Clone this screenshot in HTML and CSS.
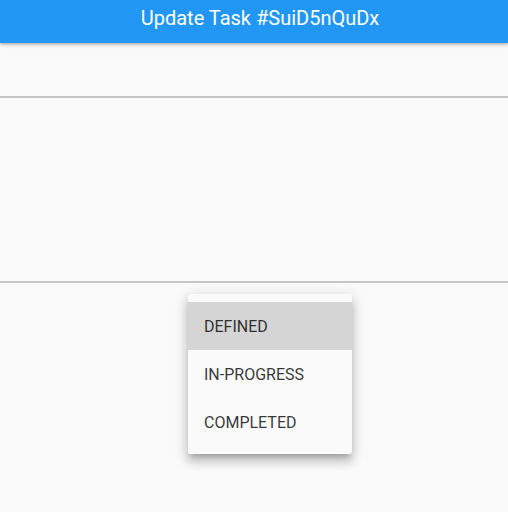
FILE: index.html
```html
<!DOCTYPE html>
<html>
<head>
<meta charset="utf-8">
<link rel="stylesheet" href="styles.css">
</head>
<body>
<header class="appbar">
  <h1 class="title">Update Task #SuiD5nQuDx</h1>
</header>
<main class="form">
  <div class="field field-single"></div>
  <div class="field field-multi"></div>
</main>
<ul class="menu">
  <li class="menu-item selected">DEFINED</li>
  <li class="menu-item">IN-PROGRESS</li>
  <li class="menu-item">COMPLETED</li>
</ul>
</body>
</html>
```

FILE: styles.css
```css
html, body {
  margin: 0;
  padding: 0;
  background: #fafafa;
  font-family: Roboto, "Liberation Sans", sans-serif;
  width: 508px;
  height: 512px;
  overflow: hidden;
}
.appbar {
  height: 43px;
  background: #2196f3;
  display: flex;
  align-items: center;
  justify-content: center;
  box-shadow: 0 2px 4px rgba(0,0,0,0.2), 0 1px 2px rgba(0,0,0,0.14);
  position: relative;
  z-index: 1;
}
.title {
  margin: 0 0 0 12px;
  color: #fff;
  font-size: 20px;
  font-weight: 400;
  line-height: 24px;
  padding-bottom: 8px;
}
.form {
  display: flex;
  flex-direction: column;
}
.field {
  border-bottom: 2px solid #c6c6c6;
}
.field-single {
  height: 53px;
}
.field-multi {
  height: 183px;
}
.menu {
  position: absolute;
  left: 188px;
  top: 294px;
  width: 164px;
  margin: 0;
  padding: 8px 0;
  list-style: none;
  background: #fafafa;
  border-radius: 2px;
  box-shadow: 0 5px 5px -3px rgba(0,0,0,0.2), 0 8px 10px 1px rgba(0,0,0,0.14), 0 3px 14px 2px rgba(0,0,0,0.12);
}
.menu-item {
  height: 48px;
  display: flex;
  align-items: center;
  padding: 0 16px;
  font-size: 16px;
  color: rgba(0,0,0,0.8);
}
.menu-item.selected {
  background: #d5d5d5;
}
```
